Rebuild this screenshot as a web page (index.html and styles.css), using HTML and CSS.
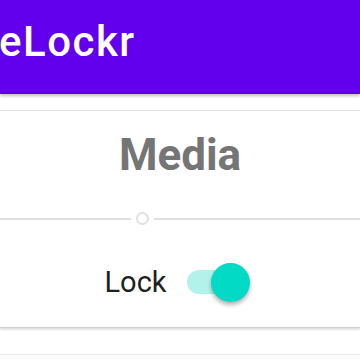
FILE: index.html
```html
<!DOCTYPE html>
<html>
<head>
<meta charset="utf-8">
<link rel="stylesheet" href="styles.css">
</head>
<body>
<header class="appbar"><h1 class="title">eLockr</h1></header>
<div class="strip"></div>
<section class="card">
  <h2 class="heading">Media</h2>
  <div class="divider"><span class="line"></span><span class="dot"></span><span class="line"></span></div>
  <div class="row">
    <span class="label">Lock</span>
    <span class="switch"><span class="track"></span><span class="thumb"></span></span>
  </div>
</section>
<div class="card2"></div>
</body>
</html>
```
FILE: styles.css
```css
html, body { margin: 0; padding: 0; }
body { width: 360px; height: 360px; overflow: hidden; background: #fafafa; font-family: Roboto, "Noto Sans", sans-serif; }
.appbar { height: 94px; box-sizing: border-box; padding-top: 21px; background: #6200ee; box-shadow: 0 2px 3px rgba(0,0,0,0.25); position: relative; z-index: 2; }
.title { margin: 0 0 0 -1px; color: #fff; font-weight: 500; font-size: 42px; letter-spacing: 1.5px; line-height: 1; }
.strip { height: 16px; background: #fff; border-bottom: 1px solid #e0e0e0; }
.card { background: #fff; padding-top: 14px; border-bottom: 1px solid #d0d0d0; box-shadow: 0 2px 2px rgba(0,0,0,0.1); height: 217px; box-sizing: border-box; position: relative; }
.heading { margin: 0; text-align: center; font-size: 44px; font-weight: 700; color: #757575; line-height: 60px; }
.divider { display: flex; align-items: center; margin-top: 27px; gap: 5px; }
.line { height: 2px; background: #e0e0e0; flex: 1; }
.line:first-child { flex: 0 0 131px; }
.dot { border: 2px solid #e0e0e0; border-radius: 50%; box-sizing: border-box; width: 13px; height: 13px; }
.row { display: flex; justify-content: center; align-items: center; gap: 20px; margin-top: 38px; padding-right: 6px; }
.label { font-size: 29px; color: #1f1f1f; }
.switch { position: relative; width: 63px; height: 38px; display: block; }
.track { position: absolute; left: 0; top: 7px; width: 56px; height: 24px; border-radius: 12px; background: #b3f2ea; }
.thumb { position: absolute; right: 0; top: 0; width: 39px; height: 39px; border-radius: 50%; background: #03dac5; box-shadow: 0 3px 4px rgba(0,0,0,0.3); }
.card2 { height: 24px; background: #fff; border-bottom: 1px solid #ececec; margin-top: 2px; }
```
